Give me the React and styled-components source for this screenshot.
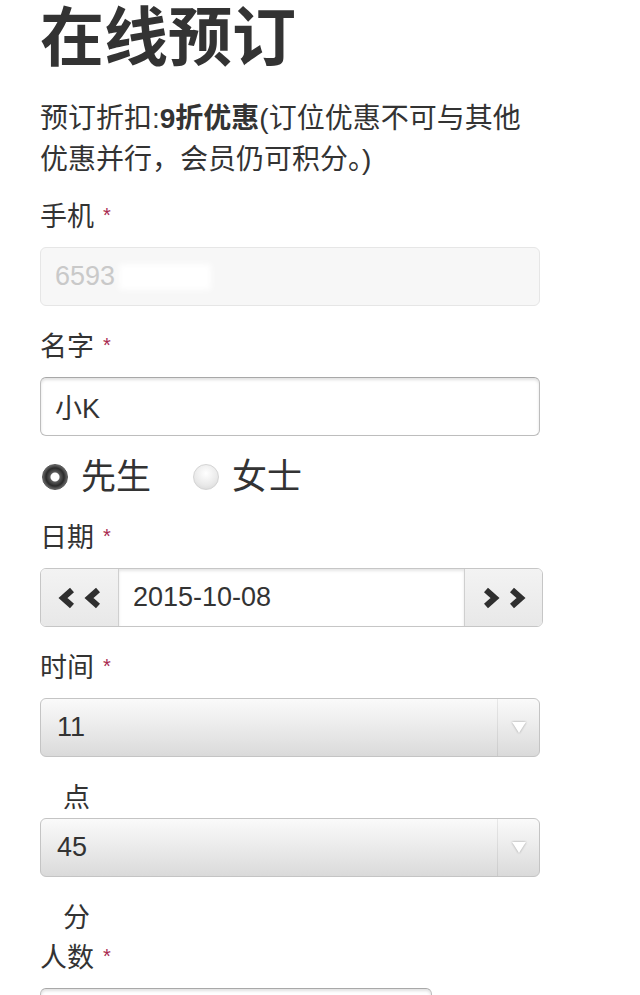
import React from "react";
import styled, { createGlobalStyle } from "styled-components";

const GlobalStyle = createGlobalStyle`
  body {
    margin: 0;
    background: #fff;
    color: #333;
    font-family: "Liberation Sans", "Noto Sans CJK SC", sans-serif;
  }
`;

const Pagina = styled.div`
  width: 503px;
  padding: 0 0 40px 40px;
`;

const Titulo = styled.h1`
  margin: 0;
  font-size: 64px;
  font-weight: 700;
  line-height: 76px;
  color: #333;
`;

const Intro = styled.p`
  margin: 22px 0 0;
  width: 500px;
  font-size: 28px;
  line-height: 41px;

  strong {
    font-weight: 700;
  }
`;

const Formulario = styled.form`
  display: flex;
  flex-direction: column;
  align-items: flex-start;
`;

const Etiqueta = styled.label`
  display: block;
  height: 40px;
  font-size: 27px;
  line-height: 40px;
  margin: ${({ $flush }) => ($flush ? "0" : "21px")} 0 10px;

  &:first-child {
    margin-top: 17px;
  }
`;

const Requerido = styled.span`
  position: relative;
  top: -4px;
  color: #a8284f;
  font-size: 20px;
  line-height: 0;
  margin-left: 9px;
`;

const Sufijo = styled.div`
  height: 40px;
  font-size: 27px;
  line-height: 40px;
  padding-left: 23px;
  margin-top: 21px;
`;

const Campo = styled.div`
  box-sizing: border-box;
  width: ${({ $width }) => $width || "500px"};
  height: 59px;
  display: flex;
  align-items: center;
  padding: 0 14px;
  border: 1px solid ${({ $disabled }) => ($disabled ? "#e6e6e6" : "#bdbdbd")};
  border-top-color: ${({ $disabled }) => ($disabled ? "#e6e6e6" : "#a8a8a8")};
  border-radius: 6px;
  background: ${({ $disabled }) => ($disabled ? "#f7f7f7" : "#fff")};
  box-shadow: ${({ $disabled }) =>
    $disabled ? "none" : "inset 0 2px 3px rgba(0, 0, 0, 0.12)"};
  color: ${({ $disabled }) => ($disabled ? "#c9c9c9" : "#333")};
  font-size: 27px;
`;

const Tachado = styled.span`
  display: inline-block;
  width: 92px;
  height: 26px;
  margin-left: 4px;
  background: #fff;
  filter: blur(3px);
`;

const FilaRadio = styled.div`
  display: flex;
  align-items: center;
  height: 40px;
  margin-top: 21px;
  padding-left: 2px;
`;

const Opcion = styled.span`
  display: flex;
  align-items: center;
  gap: 13px;
  margin-right: 42px;
  font-size: 35px;
  line-height: 40px;
`;

const Circulo = styled.span`
  box-sizing: border-box;
  width: 26px;
  height: 26px;
  border-radius: 50%;
  background: ${({ $checked }) =>
    $checked
      ? "radial-gradient(circle, #fff 0 4px, #5a5a5a 5px, #2a2a2a 9px, #777 13px)"
      : "radial-gradient(circle at 50% 35%, #fff, #e9e9e9 60%, #d2d2d2)"};
  border: 1px solid ${({ $checked }) => ($checked ? "#555" : "#d4d4d4")};
`;

const GrupoFecha = styled.div`
  box-sizing: border-box;
  width: 503px;
  height: 59px;
  display: flex;
  border: 1px solid #c6c6c6;
  border-radius: 6px;
  overflow: hidden;
`;

const BotonFecha = styled.div`
  width: 77px;
  display: flex;
  align-items: center;
  justify-content: center;
  background: linear-gradient(#f3f3f3, #e8e8e8);
  border-right: ${({ $lado }) => ($lado === "izq" ? "1px solid #cfcfcf" : "none")};
  border-left: ${({ $lado }) => ($lado === "der" ? "1px solid #cfcfcf" : "none")};
`;

const ValorFecha = styled.div`
  flex: 1;
  display: flex;
  align-items: center;
  padding-left: 14px;
  background: #fff;
  box-shadow: inset 0 2px 3px rgba(0, 0, 0, 0.1);
  font-size: 27px;
`;

const Selector = styled.div`
  box-sizing: border-box;
  width: 500px;
  height: 59px;
  display: flex;
  border: 1px solid #c4c4c4;
  border-radius: 6px;
  background: linear-gradient(#fafafa, #e9e9e9 55%, #dadada);
  font-size: 27px;
`;

const ValorSelector = styled.div`
  flex: 1;
  display: flex;
  align-items: center;
  padding-left: 16px;
`;

const CeldaFlecha = styled.div`
  width: 41px;
  display: flex;
  align-items: center;
  justify-content: center;
  border-left: 1px solid rgba(0, 0, 0, 0.07);
`;

const Triangulo = styled.span`
  width: 0;
  height: 0;
  border-left: 7px solid transparent;
  border-right: 7px solid transparent;
  border-top: 11px solid #fff;
  filter: drop-shadow(0 0 1px rgba(0, 0, 0, 0.35));
`;

const Chevrones = ({ dir }) => (
  <svg width="46" height="22" viewBox="0 0 46 22">
    <g
      fill="none"
      stroke="#2f2f2f"
      strokeWidth="6"
      strokeLinejoin="miter"
      strokeLinecap="butt"
      transform={dir === "der" ? "translate(46 0) scale(-1 1)" : undefined}
    >
      <polyline points="15,3 6,11 15,19" />
      <polyline points="41,3 32,11 41,19" />
    </g>
  </svg>
);

const App = () => (
  <Pagina>
    <GlobalStyle />
    <Titulo>在线预订</Titulo>
    <Intro>
      预订折扣:<strong>9折优惠</strong>(订位优惠不可与其他优惠并行，会员仍可积分。)
    </Intro>
    <Formulario>
      <Etiqueta>
        手机<Requerido>*</Requerido>
      </Etiqueta>
      <Campo $disabled>
        6593<Tachado />
      </Campo>

      <Etiqueta>
        名字<Requerido>*</Requerido>
      </Etiqueta>
      <Campo>小K</Campo>

      <FilaRadio>
        <Opcion>
          <Circulo $checked />
          先生
        </Opcion>
        <Opcion>
          <Circulo />
          女士
        </Opcion>
      </FilaRadio>

      <Etiqueta>
        日期<Requerido>*</Requerido>
      </Etiqueta>
      <GrupoFecha>
        <BotonFecha $lado="izq">
          <Chevrones dir="izq" />
        </BotonFecha>
        <ValorFecha>2015-10-08</ValorFecha>
        <BotonFecha $lado="der">
          <Chevrones dir="der" />
        </BotonFecha>
      </GrupoFecha>

      <Etiqueta>
        时间<Requerido>*</Requerido>
      </Etiqueta>
      <Selector>
        <ValorSelector>11</ValorSelector>
        <CeldaFlecha>
          <Triangulo />
        </CeldaFlecha>
      </Selector>
      <Sufijo>点</Sufijo>
      <Selector>
        <ValorSelector>45</ValorSelector>
        <CeldaFlecha>
          <Triangulo />
        </CeldaFlecha>
      </Selector>
      <Sufijo>分</Sufijo>

      <Etiqueta $flush>
        人数<Requerido>*</Requerido>
      </Etiqueta>
      <Campo $width="392px" />
    </Formulario>
  </Pagina>
);

export default App;
